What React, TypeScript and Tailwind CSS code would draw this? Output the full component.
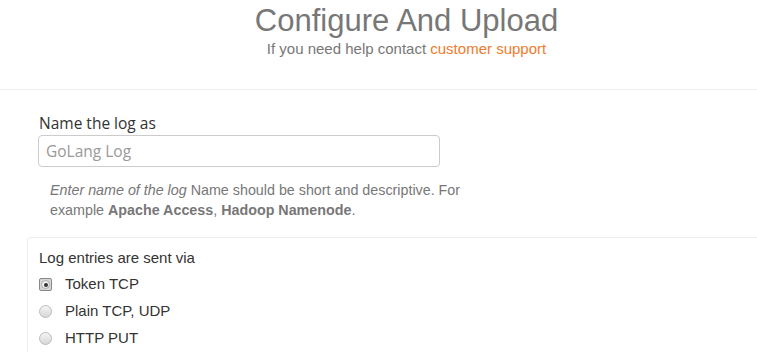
export default function App() {
  const options = ["Token TCP", "Plain TCP, UDP", "HTTP PUT"];

  return (
    <div
      className="min-h-screen overflow-hidden bg-white text-[#333]"
      style={{ fontFamily: '"Liberation Sans", Arial, sans-serif' }}
    >
      <div className="flex h-[90px] flex-col items-center border-b border-[#eee] pl-[56px] pt-[2px]">
        <h1 className="text-[31px] leading-[38px] text-[#777]">Configure And Upload</h1>
        <p className="text-[15px] leading-[17px] text-[#777]">
          If you need help contact{" "}
          <a href="#" className="text-[#f07b2e]">
            customer support
          </a>
        </p>
      </div>

      <div className="pl-[39px] pt-[23px]">
        <label
          className="block text-[15.5px] leading-[20px] text-[#333]"
          style={{ fontFamily: '"Open Sans", sans-serif' }}
        >
          Name the log as
        </label>
        <input
          type="text"
          placeholder="GoLang Log"
          className="mt-[2px] block h-[32px] w-[402px] -ml-px rounded-[4px] border border-[#ccc] px-[7px] text-[15.5px] text-[#555] placeholder:text-[#999]"
          style={{ fontFamily: '"Open Sans", sans-serif' }}
        />
        <p className="ml-[11px] mt-[13px] w-[420px] text-[14.3px] leading-[20px] text-[#777]">
          <em>Enter name of the log</em> Name should be short and descriptive. For example{" "}
          <strong>Apache Access</strong>, <strong>Hadoop Namenode</strong>.
        </p>
      </div>

      <div className="ml-[27px] mt-[17px] rounded-tl-[4px] border-l border-t border-[#eee] pl-[11px] pt-[11px]">
        <p className="text-[15px] leading-[18px] text-[#333]">Log entries are sent via</p>
        <div className="mt-[4px] flex flex-col">
          {options.map((opt, i) => (
            <label key={opt} className="flex h-[27px] items-center gap-[13px] text-[15px] text-[#333]">
              {i === 0 ? (
                <span className="flex h-[13px] w-[13px] items-center justify-center rounded-[2px] border border-[#888] bg-[#d6d6d6]">
                  <span className="flex h-[9px] w-[9px] items-center justify-center rounded-full border border-[#aaa] bg-[#f2f2f2]">
                    <span className="h-[4px] w-[4px] rounded-full bg-[#333]" />
                  </span>
                </span>
              ) : (
                <span className="h-[13px] w-[13px] rounded-full border border-[#bbb] bg-gradient-to-b from-[#f4f4f4] to-[#d8d8d8]" />
              )}
              {opt}
            </label>
          ))}
        </div>
      </div>
    </div>
  );
}
